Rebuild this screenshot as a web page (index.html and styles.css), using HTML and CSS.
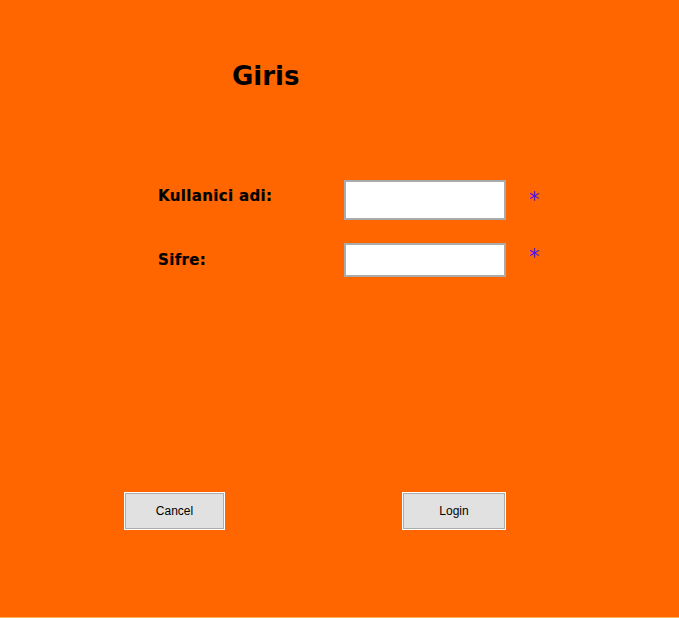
FILE: index.html
```html
<!DOCTYPE html>
<html lang="tr">
<head>
<meta charset="utf-8">
<title>Giris</title>
<link rel="stylesheet" href="styles.css">
</head>
<body>
<div class="window">
  <h1 class="title">Giris</h1>
  <div class="form">
    <label class="label label-user" for="user">Kullanici adi:</label>
    <input class="field field-user" id="user" type="text">
    <span class="req req-user">*</span>
    <label class="label label-pass" for="pass">Sifre:</label>
    <input class="field field-pass" id="pass" type="password">
    <span class="req req-pass">*</span>
  </div>
  <div class="actions">
    <button class="btn btn-cancel" type="button">Cancel</button>
    <button class="btn btn-login" type="button">Login</button>
  </div>
</div>
</body>
</html>
```
FILE: styles.css
```css
html, body {
  margin: 0;
  padding: 0;
}
body {
  background: #ff6600;
}
.window {
  width: 679px;
  height: 618px;
  box-sizing: border-box;
  background: #ff6600;
  border-bottom: 1px solid #ffb060;
  padding-top: 61px;
  overflow: hidden;
}
.title {
  margin: 0 0 0 232px;
  font-family: "DejaVu Sans", sans-serif;
  font-weight: bold;
  font-size: 26px;
  line-height: 30px;
  color: #000;
}
.form {
  margin: 89px 0 0 158px;
  display: grid;
  grid-template-columns: 186px 162px 23px auto;
  grid-template-rows: 40px 34px;
  row-gap: 23px;
}
.label {
  grid-column: 1;
  align-self: start;
  margin-top: 7px;
  font-family: "DejaVu Sans", sans-serif;
  font-weight: bold;
  font-size: 15px;
  line-height: 18px;
  letter-spacing: 0.35px;
  color: #000;
  -webkit-text-stroke: 0.2px #000;
}
.label-user { grid-row: 1; }
.label-pass { grid-row: 2; margin-top: 8px; }
.field {
  grid-column: 2;
  margin: 0;
  padding: 0;
  box-sizing: border-box;
  width: 162px;
  height: 100%;
  border: 2px solid #aaaaaa;
  background: #fff;
  outline: none;
}
.field-user { grid-row: 1; }
.field-pass { grid-row: 2; }
.req {
  grid-column: 4;
  align-self: start;
  font-family: "DejaVu Sans", sans-serif;
  font-size: 21px;
  line-height: 20px;
  color: #4a10ff;
}
.req-user { grid-row: 1; margin-top: 10px; }
.req-pass { grid-row: 2; margin-top: 4px; }
.actions {
  margin: 215px 0 0 124px;
  display: flex;
  gap: 177px;
}
.btn {
  box-sizing: border-box;
  height: 38px;
  margin: 0;
  padding: 0;
  border: 1px solid #ffffff;
  box-shadow: inset 0 0 0 1px #adadad;
  background: #e1e1e1;
  font-family: "Liberation Sans", Arial, sans-serif;
  font-size: 12px;
  color: #000;
}
.btn-cancel { width: 101px; }
.btn-login { width: 104px; }
```
